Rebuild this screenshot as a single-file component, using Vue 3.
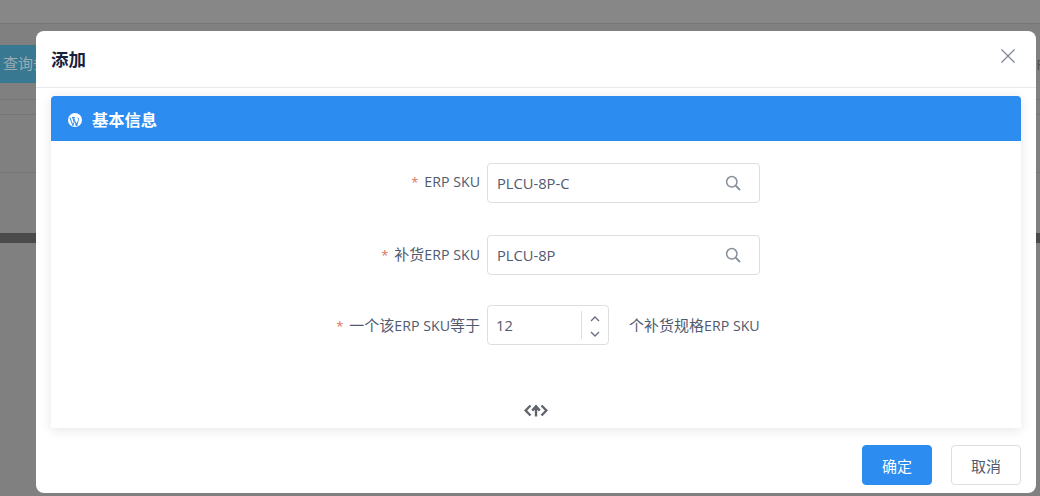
<script setup>
const rows = [
  { prefix: '', label: 'ERP SKU', value: 'PLCU-8P-C' },
  { prefix: '补货', label: 'ERP SKU', value: 'PLCU-8P' }
]
</script>

<template>
  <div class="page">
    <div class="backdrop">
      <div class="band-top"></div>
      <div class="band-query">
        <div class="query-btn">查询条件</div>
        <div class="far">F</div>
      </div>
      <div class="band-a"></div>
      <div class="band-b"></div>
      <div class="band-dark"></div>
    </div>

    <section class="dialog">
      <header class="head">
        <h2>添加</h2>
        <svg class="close" width="16" height="16" viewBox="0 0 16 16">
          <path d="M1.5 1.5 14.5 14.5M14.5 1.5 1.5 14.5" fill="none" stroke="#7d8794" stroke-width="1.2" />
        </svg>
      </header>

      <div class="body">
        <div class="panel">
          <div class="panel-title">
            <svg class="wp" width="14" height="14" viewBox="0 0 14 14">
              <circle cx="7" cy="7" r="7" fill="#fff" />
              <path d="M1.9 4.6 4.9 12.6 6.2 9 4.7 4.6M4.1 4.4H6.9M5.6 4.6 8.5 12.6 10.4 7.4C10.9 6 10.4 4.9 9.5 4.7" fill="none" stroke="#2d8cf0" stroke-width="1" />
              <path d="M7.2 12.8 8.5 9.2 9.8 12.5Z" fill="#2d8cf0" />
            </svg>
            <span>基本信息</span>
          </div>

          <div class="form">
            <div v-for="row in rows" :key="row.value" class="row">
              <label class="label"><i>*</i><span class="cjk">{{ row.prefix }}</span>{{ row.label }}</label>
              <div class="input">
                <span class="val">{{ row.value }}</span>
                <svg class="search" width="16" height="16" viewBox="0 0 16 16">
                  <circle cx="6.8" cy="6.8" r="5.2" fill="none" stroke="#858e99" stroke-width="1.5" />
                  <path d="M10.7 10.7 15 15" fill="none" stroke="#858e99" stroke-width="1.9" />
                </svg>
              </div>
            </div>

            <div class="row row-num">
              <label class="label"><i>*</i><span class="cjk">一个该</span>ERP SKU<span class="cjk">等于</span></label>
              <div class="number">
                <span class="val">12</span>
                <div class="steps">
                  <svg width="10" height="6" viewBox="0 0 10 6"><path d="M1 5 5 1 9 5" fill="none" stroke="#656e7a" stroke-width="1.3" /></svg>
                  <svg width="10" height="6" viewBox="0 0 10 6"><path d="M1 1 5 5 9 1" fill="none" stroke="#656e7a" stroke-width="1.3" /></svg>
                </div>
              </div>
              <span class="suffix"><span class="cjk">个补货规格</span>ERP SKU</span>
            </div>
          </div>

          <div class="fold">
            <svg width="24" height="13" viewBox="0 0 24 13">
              <path d="M6.5 1.5 1.6 6.5 6.5 11.5M17.5 1.5 22.4 6.5 17.5 11.5" fill="none" stroke="#5f646b" stroke-width="2.4" />
              <path d="M12 12.5V2.5M8.2 6.6 12 2.4 15.8 6.6" fill="none" stroke="#5f646b" stroke-width="2.4" />
            </svg>
          </div>
        </div>
      </div>

      <footer class="foot">
        <button class="btn primary">确定</button>
        <button class="btn">取消</button>
      </footer>
    </section>
  </div>
</template>

<style>
html, body { margin: 0; background: #808080; }
</style>

<style scoped>
.page {
  position: relative;
  width: 1040px;
  height: 496px;
  overflow: hidden;
  font-family: "Open Sans", "Noto Sans CJK SC", sans-serif;
  font-size: 14.2px;
  color: #515a6e;
}
.cjk { font-size: 15px; }
.backdrop {
  display: flex;
  flex-direction: column;
  height: 100%;
  background: #808080;
}
.band-top { height: 23px; background: #878787; border-bottom: 1px solid #757575; }
.band-query {
  display: flex;
  justify-content: space-between;
  align-items: flex-start;
  height: 76px;
  padding-top: 21px;
  box-sizing: border-box;
  border-bottom: 1px solid #757575;
  margin-bottom: 14px;
}
.query-btn {
  width: 70px;
  height: 38px;
  padding-left: 3px;
  box-sizing: border-box;
  background: #387890;
  color: #9aabb5;
  font-size: 15px;
  line-height: 36px;
  white-space: nowrap;
  overflow: hidden;
}
.far { color: #4f4f4f; font-size: 15px; line-height: 38px; margin-right: -4px; }
.band-a { height: 58px; border-top: 1px solid #757575; box-sizing: border-box; }
.band-b { height: 61px; border-top: 1px solid #757575; box-sizing: border-box; }
.band-dark { height: 10px; background: #4a4a4a; }

.dialog {
  position: absolute;
  left: 36px;
  top: 31px;
  width: 1000px;
  height: 462px;
  display: flex;
  flex-direction: column;
  background: #fff;
  border-radius: 8px;
}
.head {
  height: 57px;
  box-sizing: border-box;
  display: flex;
  align-items: center;
  justify-content: space-between;
  padding: 0 20px 2px 15px;
  border-bottom: 1px solid #e8eaec;
}
.head h2 {
  margin: 0;
  font-size: 17.5px;
  font-weight: 700;
  color: #17233d;
}
.close { margin-top: -4px; }
.body { padding: 8px 15px 0; }
.panel {
  height: 332px;
  display: flex;
  flex-direction: column;
  background: #fff;
  border-radius: 4px 4px 0 0;
  box-shadow: 0 2px 12px rgba(0, 0, 0, 0.1);
}
.panel-title {
  height: 45px;
  flex: none;
  display: flex;
  align-items: center;
  gap: 10px;
  padding-left: 17px;
  background: #2d8cf0;
  border-radius: 4px 4px 0 0;
  color: #fff;
  font-size: 16.3px;
  font-weight: 700;
}
.wp { margin-top: 2px; }
.form {
  flex: 1;
  display: flex;
  flex-direction: column;
  padding-top: 22px;
}
.row {
  display: flex;
  align-items: center;
  height: 40px;
  margin-bottom: 32px;
}
.row-num { margin-top: -2px; margin-bottom: 0; }
.label {
  width: 429px;
  margin-right: 7px;
  text-align: right;
  position: relative;
  top: -2px;
  white-space: nowrap;
}
.row-num .label { top: -1px; }
.label i {
  font-style: normal;
  color: #e0705a;
  margin-right: 6px;
  font-size: 13px;
}
.input {
  width: 273px;
  height: 40px;
  box-sizing: border-box;
  display: flex;
  align-items: center;
  justify-content: space-between;
  padding: 0 18px 0 9px;
  border: 1px solid #dcdee2;
  border-radius: 4px;
}
.val { font-size: 14.7px; line-height: 38px; }
.search { flex: none; }
.number {
  width: 122px;
  height: 40px;
  box-sizing: border-box;
  display: flex;
  align-items: stretch;
  justify-content: space-between;
  padding: 5px 0 5px 8px;
  border: 1px solid #dcdee2;
  border-radius: 4px;
}
.number .val { line-height: 28px; }
.steps {
  width: 27px;
  box-sizing: border-box;
  padding-top: 3px;
  display: flex;
  flex-direction: column;
  align-items: center;
  justify-content: center;
  gap: 9px;
  border-left: 1px solid #dcdee2;
}
.suffix { margin-left: 20px; margin-top: -2px; white-space: nowrap; }
.fold {
  height: 24px;
  flex: none;
  display: flex;
  justify-content: center;
}
.foot {
  flex: 1;
  display: flex;
  justify-content: flex-end;
  gap: 19px;
  padding: 17px 15px 0 0;
}
.btn {
  width: 70px;
  height: 40px;
  box-sizing: border-box;
  padding: 0;
  border: 1px solid #dcdee2;
  border-radius: 4px;
  background: #fff;
  color: #515a6e;
  font: inherit;
  font-size: 15px;
}
.btn.primary {
  background: #2d8cf0;
  border-color: #2d8cf0;
  color: #fff;
}
</style>
